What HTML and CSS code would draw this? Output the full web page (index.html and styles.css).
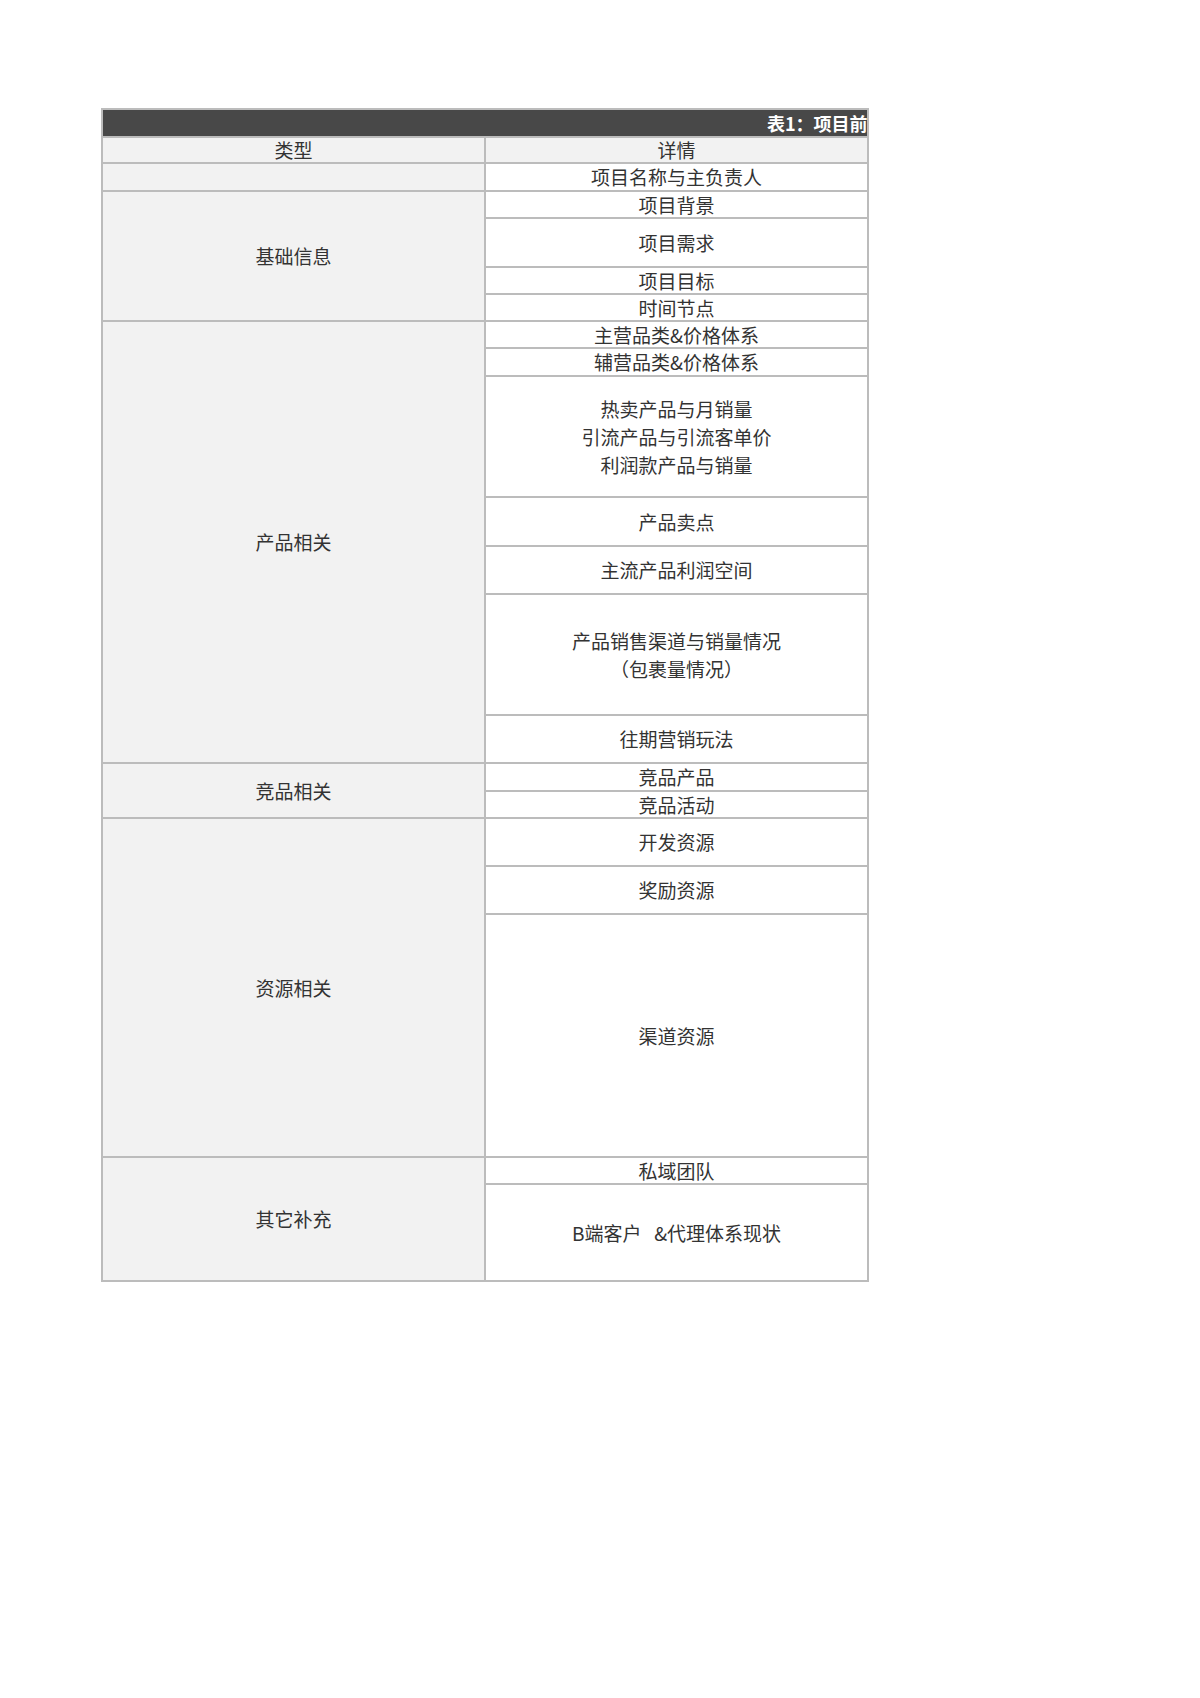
FILE: index.html
```html
<!DOCTYPE html>
<html lang="zh-CN">
<head>
<meta charset="utf-8">
<title>表1：项目前期信息</title>
<link rel="stylesheet" href="styles.css">
</head>
<body>
<div class="page">
  <table class="sheet">
    <colgroup><col class="c-type"><col class="c-detail"></colgroup>
    <tr class="h28 title-row"><td colspan="2" class="title"><div class="title-clip">表1：项目前期信息收集</div></td></tr>
    <tr class="h26 head-row"><td class="type">类型</td><td class="detail head">详情</td></tr>
    <tr class="h28"><td class="type"></td><td class="detail">项目名称与主负责人</td></tr>
    <tr class="h27"><td class="type" rowspan="4">基础信息</td><td class="detail">项目背景</td></tr>
    <tr class="h49"><td class="detail">项目需求</td></tr>
    <tr class="h27"><td class="detail">项目目标</td></tr>
    <tr class="h27"><td class="detail">时间节点</td></tr>
    <tr class="h27"><td class="type" rowspan="7">产品相关</td><td class="detail">主营品类&amp;价格体系</td></tr>
    <tr class="h28"><td class="detail">辅营品类&amp;价格体系</td></tr>
    <tr class="h121"><td class="detail multi">热卖产品与月销量<br>引流产品与引流客单价<br>利润款产品与销量</td></tr>
    <tr class="h49"><td class="detail">产品卖点</td></tr>
    <tr class="h48"><td class="detail">主流产品利润空间</td></tr>
    <tr class="h121"><td class="detail multi">产品销售渠道与销量情况<br>（包裹量情况）</td></tr>
    <tr class="h48"><td class="detail">往期营销玩法</td></tr>
    <tr class="h28"><td class="type" rowspan="2">竞品相关</td><td class="detail">竞品产品</td></tr>
    <tr class="h27"><td class="detail">竞品活动</td></tr>
    <tr class="h48"><td class="type" rowspan="3">资源相关</td><td class="detail">开发资源</td></tr>
    <tr class="h48"><td class="detail">奖励资源</td></tr>
    <tr class="h243"><td class="detail">渠道资源</td></tr>
    <tr class="h27"><td class="type" rowspan="2">其它补充</td><td class="detail">私域团队</td></tr>
    <tr class="h97"><td class="detail">B端客户&nbsp;&nbsp;&nbsp;&amp;代理体系现状</td></tr>
  </table>
</div>
</body>
</html>
```
FILE: styles.css
```css
html, body {
  margin: 0;
  padding: 0;
  background: #ffffff;
}
.page {
  padding: 108px 0 0 101px;
}
.sheet {
  border-collapse: collapse;
  table-layout: fixed;
  width: 766px;
  font-family: "Noto Sans CJK SC", "Noto Sans", sans-serif;
  font-size: 19px;
  color: #333333;
}
.c-type { width: 383px; }
.c-detail { width: 383px; }
.sheet td {
  border: 2px solid #bcbcbc;
  padding: 0;
  text-align: center;
  vertical-align: middle;
  line-height: 22px;
  white-space: nowrap;
}
.title {
  background: #484848;
}
.title-clip {
  overflow: hidden;
  white-space: nowrap;
  padding-left: 664px;
  text-align: left;
  color: #ffffff;
  font-weight: bold;
  font-size: 18px;
  line-height: 22px;
}
.type {
  background: #f2f2f2;
}
.detail {
  background: #ffffff;
}
.detail.head {
  background: #f2f2f2;
}
.multi {
  line-height: 28px !important;
}
.h26 { height: 26px; }
.h27 { height: 27px; }
.h28 { height: 28px; }
.h48 { height: 48px; }
.h49 { height: 49px; }
.h97 { height: 97px; }
.h121 { height: 121px; }
.h243 { height: 243px; }
```
